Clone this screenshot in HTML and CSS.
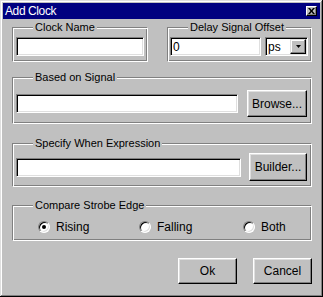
FILE: index.html
```html
<!DOCTYPE html>
<html lang="en">
<head>
  <meta charset="UTF-8">
  <title>Add Clock</title>
  <link rel="stylesheet" href="styles.css">
</head>
<body>
  <div class="window">
    <div class="titlebar">
      <span class="title">Add Clock</span>
      <button class="close">
        <svg width="7" height="6" viewBox="0 0 7 6"><path d="M0 0h2l1.5 2 1.5-2h2l-2.5 3 2.5 3h-2l-1.5-2-1.5 2h-2l2.5-3z" fill="#000"/></svg>
      </button>
    </div>

    <div class="content">
      <div class="row-top">
        <div class="group group-name">
          <div class="legend">Clock Name</div>
          <input type="text" class="field field-name">
        </div>
        <div class="group group-delay">
          <div class="legend">Delay Signal Offset</div>
          <div class="inline">
            <input type="text" class="field field-delay" value="0">
            <div class="combo">
              <span class="combo-value">ps</span>
              <span class="drop">
                <svg width="5" height="3" viewBox="0 0 5 3"><path d="M0 0h5l-2.5 3z" fill="#000"/></svg>
              </span>
            </div>
          </div>
        </div>
      </div>

      <div class="group group-signal">
        <div class="legend">Based on Signal</div>
        <div class="inline">
          <input type="text" class="field field-signal">
          <button class="btn btn-side">Browse...</button>
        </div>
      </div>

      <div class="group group-expr">
        <div class="legend">Specify When Expression</div>
        <div class="inline">
          <input type="text" class="field field-expr">
          <button class="btn btn-side btn-builder">Builder...</button>
        </div>
      </div>

      <div class="group group-edge">
        <div class="legend">Compare Strobe Edge</div>
        <div class="radios">
          <label class="option opt-rising"><span class="radio checked"></span>Rising</label>
          <label class="option opt-falling"><span class="radio"></span>Falling</label>
          <label class="option"><span class="radio"></span>Both</label>
        </div>
      </div>

      <div class="actions">
        <button class="btn btn-action">Ok</button>
        <button class="btn btn-action">Cancel</button>
      </div>
    </div>
  </div>
</body>
</html>
```

FILE: styles.css
```css
body {
  margin: 0;
  background: #c0c0c0;
}
.window {
  width: 323px;
  height: 297px;
  box-sizing: border-box;
  padding: 3px;
  background: #c0c0c0;
  box-shadow: inset -1px -1px #000, inset 1px 1px #dfdfdf, inset -2px -2px #808080, inset 2px 2px #fff;
  font-family: "Liberation Sans", Arial, sans-serif;
  font-size: 11px;
  color: #000;
}
.titlebar {
  height: 16px;
  background: #000080;
  display: flex;
  align-items: center;
  justify-content: space-between;
  padding: 0 3px 0 2px;
}
.title {
  color: #fff;
  font-size: 12px;
  letter-spacing: -0.4px;
}
.close {
  width: 11px;
  height: 10px;
  padding: 0;
  box-sizing: border-box;
  background: #c0c0c0;
  border: 1px solid;
  border-color: #fff #000 #000 #fff;
  box-shadow: inset -1px -1px #808080;
  display: flex;
  align-items: center;
  justify-content: center;
}
.content {
  padding: 0 8px 0 9px;
}
.row-top {
  display: flex;
  justify-content: space-between;
  margin-top: 8px;
}
.group {
  box-sizing: border-box;
  border: 1px solid;
  border-color: #808080 #fff #fff #808080;
  box-shadow: inset 1px 1px #fff, inset -1px -1px #808080;
  padding: 0 3px;
}
.legend {
  display: table;
  margin: -7px 0 0 17px;
  padding: 0 2px;
  line-height: 13px;
  background: #c0c0c0;
}
.group-name {
  width: 136px;
  height: 35px;
}
.group-delay {
  width: 145px;
  height: 35px;
  padding-left: 2px;
}
.group-delay .legend {
  margin-left: 18px;
}
.field {
  box-sizing: border-box;
  height: 19px;
  margin: 0;
  padding: 0 2px;
  border: 1px solid;
  border-color: #808080 #fff #fff #808080;
  box-shadow: inset 1px 1px #000, inset -1px -1px #dfdfdf;
  background: #fff;
  font: inherit;
  font-size: 12px;
  outline: none;
}
.field-name {
  display: block;
  width: 128px;
  margin-top: 3px;
}
.inline {
  display: flex;
  align-items: center;
}
.group-delay .inline {
  margin-top: 3px;
}
.field-delay {
  width: 91px;
}
.combo {
  box-sizing: border-box;
  width: 43px;
  height: 19px;
  margin-left: 4px;
  border: 1px solid;
  border-color: #808080 #fff #fff #808080;
  box-shadow: inset 1px 1px #000, inset -1px -1px #dfdfdf;
  background: #fff;
  display: flex;
  align-items: center;
  padding: 1px 1px 1px 2px;
  font-size: 12px;
}
.combo-value {
  flex: 1;
}
.drop {
  box-sizing: border-box;
  width: 16px;
  height: 15px;
  background: #c0c0c0;
  border: 1px solid;
  border-color: #dfdfdf #000 #000 #dfdfdf;
  box-shadow: inset -1px -1px #808080, inset 1px 1px #fff;
  display: flex;
  align-items: center;
  justify-content: center;
}
.btn {
  box-sizing: border-box;
  padding: 0;
  border: 1px solid;
  border-color: #fff #000 #000 #fff;
  box-shadow: inset -1px -1px #808080, inset 1px 1px #dfdfdf;
  background: #c0c0c0;
  font: inherit;
  font-size: 12px;
  color: #000;
}
.group-signal {
  margin-top: 15px;
  height: 47px;
}
.group-signal .inline {
  margin-top: 6px;
}
.field-signal {
  width: 222px;
}
.btn-side {
  width: 60px;
  height: 27px;
  margin-left: 9px;
}
.group-expr {
  margin-top: 19px;
  height: 44px;
}
.group-expr .inline {
  margin-top: 3px;
}
.field-expr {
  width: 225px;
}
.btn-builder {
  width: 58px;
  height: 28px;
  margin-left: 8px;
}
.group-edge {
  margin-top: 18px;
  height: 36px;
}
.radios {
  display: flex;
  align-items: center;
  margin-top: 8px;
  padding-left: 22px;
  font-size: 12px;
}
.option {
  display: flex;
  align-items: center;
  gap: 6px;
}
.opt-rising {
  width: 101px;
}
.opt-falling {
  width: 104px;
}
.radio {
  box-sizing: border-box;
  width: 12px;
  height: 12px;
  border-radius: 50%;
  border: 1px solid;
  border-color: #808080 #fff #fff #808080;
  box-shadow: inset 1px 1px #000, inset -1px -1px #dfdfdf;
  background: #fff;
  display: flex;
  align-items: center;
  justify-content: center;
}
.radio.checked::after {
  content: "";
  width: 4px;
  height: 4px;
  border-radius: 50%;
  background: #000;
}
.actions {
  display: flex;
  justify-content: flex-end;
  gap: 16px;
  margin-top: 17px;
}
.btn-action {
  width: 59px;
  height: 26px;
}
```
